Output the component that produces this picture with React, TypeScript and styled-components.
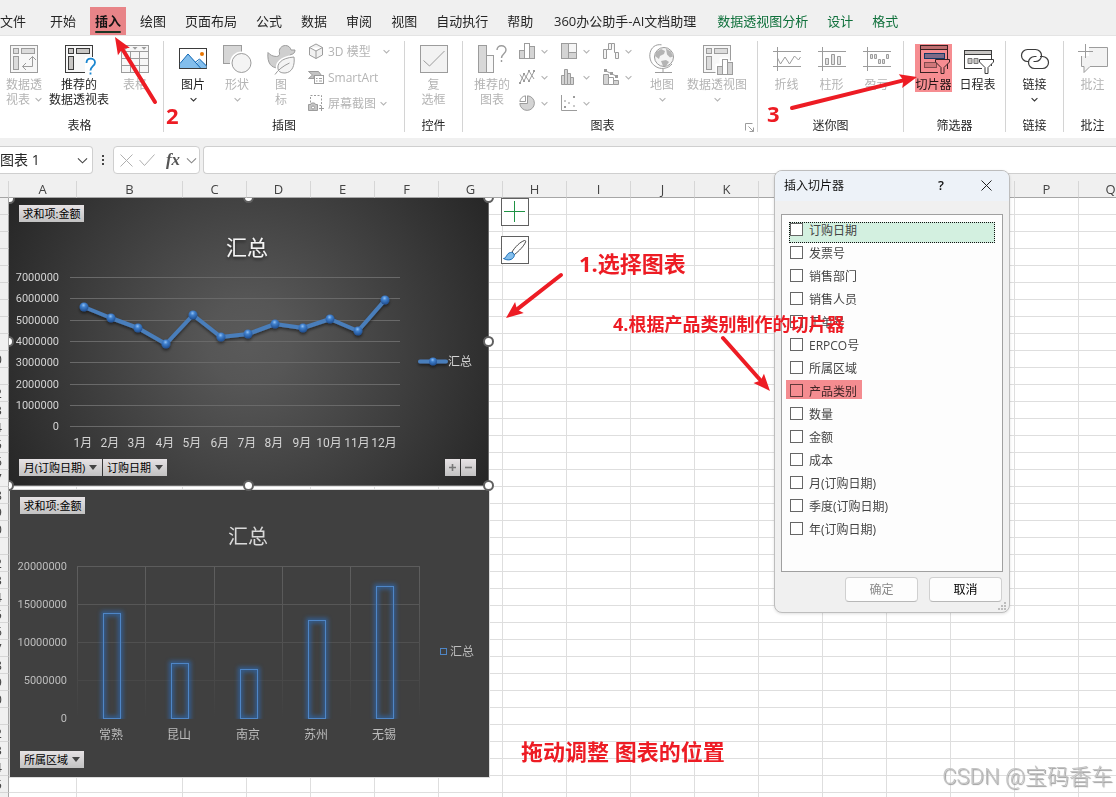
import React from "react";
import styled, { createGlobalStyle } from "styled-components";

const RED = "#ed1c24";
const MARK = "#f68d91";
const GREY = "#9c9c9c";
const DARK = "#3b3b3b";
const LINE = "#dedede";
const UI_FONT = '"Open Sans", "Noto Sans CJK SC", sans-serif';

const GlobalStyle = createGlobalStyle`
  * { box-sizing: border-box; }
  body { margin: 0; background: #fff; font-family: ${UI_FONT}; color: #262626; }
  button, input { font: inherit; color: inherit; }
  button { border: 0; padding: 0; background: none; }
`;

const App = styled.main`
  position: relative;
  height: 100vh;
  overflow: hidden;
  display: flex;
  flex-direction: column;
`;

/* ---------- menu tabs ---------- */

const TabBar = styled.nav`
  flex: none;
  display: flex;
  gap: 9px;
  height: 36px;
  padding-top: 7px;
  background: #f0f0f0;
  border-bottom: 1px solid #e4e4e4;
  overflow: hidden;
`;

const Tab = styled.button<{ $active?: boolean; $context?: boolean; $file?: boolean; $min?: number }>`
  position: relative;
  flex: none;
  height: 29px;
  min-width: ${(p) => p.$min ?? 36}px;
  padding: 0 5px 2px;
  margin: ${(p) => (p.$file ? "0 5px 0 -5px" : "0")};
  font-size: 13px;
  line-height: 26px;
  white-space: nowrap;
  font-weight: ${(p) => (p.$active ? 700 : 400)};
  color: ${(p) => (p.$context ? "#0f703b" : p.$active ? "#141414" : "#262626")};
  background: ${(p) => (p.$active ? "#e88488" : "none")};
  &::after {
    content: "";
    display: ${(p) => (p.$active ? "block" : "none")};
    position: absolute;
    left: 5px;
    right: 5px;
    bottom: 3px;
    height: 2px;
    border-radius: 1px;
    background: #1d3524;
  }
`;

/* ---------- ribbon ---------- */

const Ribbon = styled.section`
  flex: none;
  display: flex;
  height: 102px;
  padding: 2px 0 6px;
  background: #fff;
  overflow: hidden;
`;

const Group = styled.div<{ $width: number; $padRight?: number }>`
  position: relative;
  flex: none;
  display: flex;
  flex-direction: column;
  justify-content: space-between;
  width: ${(p) => p.$width}px;
  padding-right: ${(p) => p.$padRight ?? 1}px;
  &::after {
    content: "";
    position: absolute;
    right: 0;
    top: 3px;
    bottom: 0;
    width: 1px;
    background: #d4d4d4;
  }
`;

const GroupBody = styled.div<{ $start?: number; $center?: boolean; $gap?: number }>`
  display: flex;
  align-items: flex-start;
  gap: ${(p) => p.$gap ?? 0}px;
  padding-left: ${(p) => p.$start ?? 0}px;
  justify-content: ${(p) => (p.$center ? "center" : "flex-start")};
`;

const GroupName = styled.div`
  text-align: center;
  font-size: 12px;
  line-height: 13px;
`;

const LargeButton = styled.button<{ $width: number; $off?: boolean; $marked?: boolean }>`
  position: relative;
  flex: none;
  display: flex;
  flex-direction: column;
  align-items: center;
  width: ${(p) => p.$width}px;
  margin-top: 6px;
  font-size: 12px;
  line-height: 15px;
  white-space: nowrap;
  color: ${(p) => (p.$off ? "#b4b4b4" : "#262626")};
  svg.icon { display: block; margin-bottom: 1px; overflow: visible; }
  &::after {
    content: "";
    display: ${(p) => (p.$marked ? "block" : "none")};
    position: absolute;
    inset: 0;
    background: ${MARK};
    mix-blend-mode: multiply;
  }
`;

const LabelLine = styled.span`
  display: flex;
  align-items: center;
  justify-content: center;
  gap: 5px;
  height: 15px;
`;

const SmallColumn = styled.div`
  display: flex;
  flex-direction: column;
  padding-left: 5px;
`;

const SmallButton = styled.button<{ $gap?: number }>`
  display: flex;
  align-items: center;
  gap: 4px;
  height: 26px;
  font-size: 12px;
  line-height: 15px;
  color: #b4b4b4;
  svg.chev { margin-left: ${(p) => p.$gap ?? 4}px; }
`;

const ChartGrid = styled.div`
  display: grid;
  grid-template-columns: repeat(3, 42px);
  grid-auto-rows: 26px;
  padding-left: 2px;
`;

const ChartButton = styled.button`
  display: flex;
  align-items: center;
  gap: 6px;
`;

const Launcher = styled.button`
  position: absolute;
  right: 3px;
  bottom: -1px;
  line-height: 0;
`;

/* ---------- formula bar ---------- */

const FormulaBar = styled.section`
  flex: none;
  display: flex;
  align-items: center;
  height: 43px;
  padding: 8px 0 7px;
  background: #f0f0f0;
`;

const NameBox = styled.div`
  display: flex;
  align-items: center;
  width: 93px;
  height: 28px;
  padding-right: 4px;
  background: #fff;
  border: 1px solid #cfcfcf;
  border-left: 0;
  border-radius: 0 4px 4px 0;
  input {
    flex: 1;
    min-width: 0;
    padding: 0;
    border: 0;
    background: none;
    font-size: 14px;
    line-height: 20px;
  }
`;

const Dots = styled.div`
  display: flex;
  flex-direction: column;
  align-items: center;
  gap: 2px;
  width: 20px;
  i { width: 2px; height: 2px; background: #444; }
`;

const FxBox = styled.div`
  display: flex;
  align-items: center;
  justify-content: space-between;
  width: 87px;
  height: 28px;
  padding: 0 2px 0 6px;
  margin-right: 3px;
  background: #fff;
  border: 1px solid #cfcfcf;
  border-radius: 4px;
  button { line-height: 0; }
`;

const FxButton = styled.button`
  && {
    margin-left: 5px;
    font-family: "Liberation Serif", serif;
    font-style: italic;
    font-weight: 700;
    font-size: 17px;
    line-height: 20px;
    color: #555;
  }
`;

const FormulaInput = styled.input`
  flex: 1;
  min-width: 0;
  height: 28px;
  padding: 0 8px;
  font-size: 14px;
  background: #fff;
  border: 1px solid #cfcfcf;
  border-right: 0;
  border-radius: 4px 0 0 4px;
`;

/* ---------- sheet ---------- */

const Sheet = styled.section`
  position: relative;
  flex: 1;
  min-height: 0;
  overflow: hidden;
`;

const Grid = styled.table`
  table-layout: fixed;
  width: 1500px;
  margin-left: -19px;
  border-spacing: 0;
  th, td { padding: 0; height: 17px; line-height: 16px; overflow: hidden; }
  th { font-size: 13px; font-weight: 400; color: #444; background: #f0f0f0; text-align: center; }
  thead th { border-bottom: 1px solid #a6a6a6; border-right: 1px solid #d6d6d6; }
  tbody th { border-right: 1px solid #a6a6a6; border-bottom: 1px solid #d6d6d6; }
  td { border-right: 1px solid ${LINE}; border-bottom: 1px solid ${LINE}; }
`;

const Canvas = styled.div`
  position: absolute;
  left: 9px;
  top: 17px;
  right: 0;
  bottom: 0;
  overflow: hidden;
`;

const ChartFrame = styled.figure<{ $x: number; $y: number; $dark?: boolean }>`
  position: absolute;
  left: ${(p) => p.$x}px;
  top: ${(p) => p.$y}px;
  width: ${(p) => (p.$dark ? 479 : 480)}px;
  height: ${(p) => (p.$dark ? 287 : 288)}px;
  margin: 0;
  background: ${(p) => (p.$dark ? "#404040" : "radial-gradient(circle at 50% 50%, #5a5a5a 0, #565656 15%, #262626 100%)")};
  box-shadow: ${(p) => (p.$dark ? "0 0 0 1px #dcdcdc" : "inset -1px -1px 0 #6a6a6a")};
  > svg { display: block; }
`;

const FieldButton = styled.button<{ $x: number; $y: number; $w: number }>`
  position: absolute;
  left: ${(p) => p.$x}px;
  top: ${(p) => p.$y}px;
  width: ${(p) => p.$w}px;
  height: 17px;
  display: flex;
  align-items: center;
  justify-content: center;
  gap: 4px;
  font-size: 11px;
  line-height: 17px;
  white-space: nowrap;
  color: #000;
  background: linear-gradient(#e6e2e4, #c2c2c2);
`;

const Handle = styled.i<{ $x: number; $y: number }>`
  position: absolute;
  left: ${(p) => p.$x - 5}px;
  top: ${(p) => p.$y - 5}px;
  width: 11px;
  height: 11px;
  border-radius: 50%;
  background: #fff;
  border: 2px solid #606060;
`;

const SideTool = styled.button<{ $y: number }>`
  position: absolute;
  left: 492px;
  top: ${(p) => p.$y}px;
  width: 28px;
  height: 28px;
  background: #fff;
  border: 1px solid #606060;
  line-height: 0;
`;

/* ---------- dialog ---------- */

const Dialog = styled.section`
  position: absolute;
  left: 774px;
  top: 170px;
  width: 236px;
  background: #f0f0f0;
  border: 1px solid #bdbdbd;
  border-radius: 8px;
  overflow: hidden;
  box-shadow: 0 1px 3px rgba(0, 0, 0, 0.12);
`;

const DialogTitle = styled.header`
  display: flex;
  align-items: center;
  height: 30px;
  padding: 0 15px 2px 9px;
  background: #edf2f8;
  font-size: 12px;
  color: #111;
  h2 { flex: 1; margin: 0; font-size: 12px; font-weight: 400; line-height: 15px; }
  button { width: 16px; line-height: 0; }
`;

const HelpButton = styled.button`
  && { margin-right: 29px; font-size: 13px; font-weight: 600; line-height: 15px; }
`;

const FieldList = styled.div`
  height: 358px;
  margin: 13px 6px 0;
  padding: 7px;
  background: #fdfdfd;
  border: 1px solid #a0a0a0;
`;

const FieldRow = styled.label<{ $focus?: boolean; $marked?: boolean }>`
  position: relative;
  display: flex;
  align-items: flex-start;
  gap: 6px;
  height: 21px;
  margin-bottom: 2px;
  border: 1px dotted ${(p) => (p.$focus ? "#111" : "transparent")};
  background: ${(p) => (p.$focus ? "#d3f0e0" : "none")};
  font-size: 12px;
  line-height: 16px;
  color: #444;
  input {
    appearance: none;
    flex: none;
    width: 13px;
    height: 13px;
    margin: 0;
    background: #fff;
    border: 1px solid #666;
  }
  &::after {
    content: "";
    display: ${(p) => (p.$marked ? "block" : "none")};
    position: absolute;
    left: -4px;
    top: -4px;
    width: 76px;
    height: 19px;
    background: ${MARK};
    mix-blend-mode: multiply;
  }
`;

const DialogFooter = styled.footer`
  position: relative;
  display: flex;
  justify-content: flex-end;
  gap: 11px;
  padding: 5px 7px 10px;
`;

const DialogButton = styled.button`
  width: 73px;
  height: 25px;
  font-size: 12px;
  line-height: 15px;
  color: #000;
  background: #fdfdfd;
  border: 1px solid #d0d0d0;
  border-bottom-color: #b8b8b8;
  border-radius: 4px;
  &:disabled { color: #8a8a8a; }
`;

const Grip = styled.svg`
  position: absolute;
  right: 2px;
  bottom: 1px;
`;

/* ---------- annotations ---------- */

const Notes = styled.div`
  position: absolute;
  inset: 0;
  pointer-events: none;
  > svg { position: absolute; left: 0; top: 0; }
`;

const Note = styled.span<{ $x: number; $y: number; $size: number }>`
  position: absolute;
  left: ${(p) => p.$x}px;
  top: ${(p) => p.$y}px;
  font-size: ${(p) => p.$size}px;
  line-height: 24px;
  font-weight: 700;
  white-space: nowrap;
  color: ${RED};
`;

const Watermark = styled.span`
  position: absolute;
  right: 3px;
  bottom: 7px;
  font-family: Roboto, "Noto Sans CJK SC", sans-serif;
  font-size: 22px;
  font-weight: 300;
  line-height: 26px;
  white-space: nowrap;
  color: #c4c4c4;
  text-shadow: 1px 1px 1px #9a9a9a;
`;

/* ---------- icons ---------- */

const Chevron = ({ color = "#b4b4b4", size = 7 }: { color?: string; size?: number }) => (
  <svg className="chev" width={size} height={size} viewBox="0 0 7 7" fill="none" stroke={color} strokeWidth={size > 7 ? 0.7 : 1.1}>
    <path d="M.6 2.2 3.5 5 6.4 2.2" />
  </svg>
);

type IconProps = { children: React.ReactNode; size?: number; stroke?: string; fill?: string };
const Icon = ({ children, size = 32, stroke = GREY, fill = "none" }: IconProps) => (
  <svg className="icon" width={size} height={size} viewBox={`0 0 ${size} ${size}`} fill={fill} stroke={stroke}>
    {children}
  </svg>
);

const PivotFrame = ({ shade }: { shade: string }) => (
  <>
    <rect x="2.5" y="1.5" width="27" height="27" fill="#f7f7f7" />
    <g fill={shade}>
      <rect x="5.5" y="4.5" width="5" height="5" />
      <rect x="13.5" y="4.5" width="13" height="5" />
      <rect x="5.5" y="12.5" width="5" height="13" />
    </g>
  </>
);

const PivotIcon = () => (
  <Icon>
    <PivotFrame shade="#dcdcdc" />
    <path d="M14.5 22.5h10v-10M18 19l-3.5 3.5L18 26M21 16l3.5-3.5L28 16" />
  </Icon>
);

const SuggestPivotIcon = () => (
  <Icon stroke={DARK}>
    <PivotFrame shade="#c8c6c4" />
    <path d="M22 13h10v18H22z" fill="#fff" stroke="none" />
    <path d="M23.5 19c0-6 8.5-5.5 8.5-.5 0 3.500-4.500 4-4.500 8M27.500 28.500v2" stroke="#1a86d0" strokeWidth="1.800" />
  </Icon>
);

const TableIcon = () => (
  <Icon>
    <rect x="2.500" y="1.500" width="27" height="27" fill="#f7f7f7" />
    <path d="M2.500 7.500h27M2.500 14.500h27M2.500 21.500h27M11.500 7.500v21M20.500 7.500v21" />
    <path d="M4 3h5L6.500 5.800zM13.500 3h5L16 5.800zM22.500 3h5L25 5.800z" fill={GREY} stroke="none" />
  </Icon>
);

const PictureIcon = () => (
  <Icon stroke={DARK}>
    <rect x="2.500" y="4.500" width="27" height="20" fill="#fff" />
    <path d="M3 19.500 11 10l8.500 9L23 15.500l6.500 6v3H3z" fill="#83beec" stroke="none" />
    <path d="M3 19.500 11 10l12.500 14M18 18.500l4.500-3.500 7 7" stroke="#1369b5" />
    <path d="M2.500 24.500h27" />
    <circle cx="25" cy="10" r="2" fill="#e97500" stroke="none" />
  </Icon>
);

const ShapesIcon = () => (
  <Icon>
    <rect x="2.500" y="1.500" width="18" height="18" fill="#d6d6d6" />
    <circle cx="20.500" cy="19" r="11.500" fill="#fff" stroke="none" />
    <circle cx="20.500" cy="19" r="9.500" fill="#f4f4f4" />
  </Icon>
);

const DuckIcon = () => (
  <Icon>
    <path
      d="M14.500 9c-1-4 2-7.500 6-7.500 3 0 5 2 5.500 4.500h4c0 3-2 4.500-4.500 4.500-.500 2-2 4-3 5.500-2 4.500-5 8-9 8C6 24 2 19 3 8.500c2 2.500 5 4 8.500 4 2 0 3.500-1.500 3-3.500z"
      fill="#cfcfcf"
    />
    <path d="M29 13c1 8-1.500 15.500-9 16-3 0-5-.500-6.500-2.500C11 20 16 14 29 13z" fill="#fff" stroke="#fff" strokeWidth="4" />
    <path d="M29 13c1 8-1.500 15.500-9 16-3 0-5-.500-6.500-2.500C11 20 16 14 29 13z" fill="#f4f4f4" />
    <path d="M10 30.500C13 26 18 22 24.500 19" />
  </Icon>
);

const CubeIcon = () => (
  <Icon size={16}>
    <path d="M8 1l6.500 3.500v7.500L8 15.500 1.500 12V4.500zM1.500 4.500 8 8l6.500-3.500M8 8v7.500" fill="#f1f1f1" />
  </Icon>
);

const SmartArtIcon = () => (
  <Icon size={16}>
    <path d="M.5 2.500h10l3 4H6v3H.5l4-3.500z" fill="#c4c4c4" />
    <rect x="6.500" y="6.500" width="9" height="8" fill="#fff" />
    <path d="M8 9.500h1.500M11 9.500h3M8 12h1.500M11 12h3" />
  </Icon>
);

const ScreenshotIcon = () => (
  <Icon size={16}>
    <rect x="2.500" y=".5" width="11" height="10" strokeDasharray="2 1.500" />
    <path d="M.5 9.500h2l1-1.500h3l1 1.500h2v6h-9z" fill="#c4c4c4" />
    <circle cx="5" cy="12.500" r="1.500" fill="#fff" />
    <path d="M11 13.500h5M13.500 11v5" />
  </Icon>
);

const CheckboxIcon = () => (
  <Icon>
    <rect x="2.500" y="1.500" width="27" height="27" fill="#f2f2f2" />
    <path d="M5.500 16.500l6 5.500L26.500 7" />
  </Icon>
);

const SuggestChartIcon = () => (
  <Icon>
    <rect x="2.500" y="1.500" width="8" height="27" fill="#d8d8d8" />
    <rect x="10.500" y="11.500" width="7" height="17" fill="#f8f8f8" />
    <path d="M21 6c0-6 9-5.500 9 0 0 3.500-4.500 4-4.500 8M25.500 16v2" strokeWidth="1.400" />
  </Icon>
);

const chartIcons: { name: string; art: React.ReactNode }[] = [
  {
    name: "柱形图",
    art: (
      <>
        <rect x=".5" y="7.500" width="5" height="8" fill="#d4d4d4" />
        <rect x="5.500" y=".5" width="5" height="15" fill="#fff" />
        <rect x="10.500" y="3.500" width="5" height="12" fill="#d4d4d4" />
      </>
    ),
  },
  {
    name: "层次结构图",
    art: (
      <>
        <rect x=".5" y=".5" width="15" height="15" fill="#d4d4d4" />
        <path d="M7.500.5h8v9h-8z" fill="#f6f6f6" />
        <path d="M7.500 9v6.500" />
      </>
    ),
  },
  {
    name: "瀑布图",
    art: <path d="M.5 15.500v-9h3v9zM5.500 6.500v-6h3v6zM8.500.5h3v9M12.500 9.500h3v6h-3zM3.500 6.500h2M11.500 9.500h1" fill="#f4f4f4" />,
  },
  {
    name: "折线图",
    art: (
      <>
        <path d="M1 14l4-9 5 7 5-9.500" />
        <path d="M1 5.500 5 12l5-10 5 8" />
        <path d="M0 13h2v2H0zM4 4h2v2H4zM9 11h2v2H9zM14 1h2v2h-2zM4 11h2v2H4zM9 1h2v2H9z" fill={GREY} stroke="none" />
      </>
    ),
  },
  {
    name: "统计图",
    art: <path d="M.5 15.500v-9h3v9zM3.500 15.500V.5h3v15zM6.500 15.500v-11h3v11zM9.500 15.500v-7h3v7z" fill="#d4d4d4" />,
  },
  {
    name: "组合图",
    art: (
      <>
        <path d="M.5 15.500v-10h5v10z" fill="#d4d4d4" />
        <path d="M5.500 15.500v-7h5v7z" fill="#fff" />
        <path d="M10.500 15.500v-4h5v4z" fill="#d4d4d4" />
        <path d="M2 1.500l6 3 6 3" />
        <path d="M1 0h3v3H1zM7 3h3v3H7zM12 6h3v3h-3z" fill={GREY} stroke="none" />
      </>
    ),
  },
  {
    name: "饼图",
    art: (
      <>
        <path d="M8.500.8A7.300 7.300 0 1 1 .8 8.500h7.700z" fill="#d4d4d4" />
        <path d="M6.500.8v5.700H.8A7 7 0 0 1 6.500.8z" fill="#fff" />
      </>
    ),
  },
  {
    name: "散点图",
    art: (
      <>
        <path d="M.5 0v15.500H16" />
        <path d="M3 5h2v2H3zM7 7h2v2H7zM12 10h2v2h-2z" fill="#c9c9c9" stroke="none" />
        <path d="M12 1h2v2h-2zM3 11h2v2H3z" fill={GREY} stroke="none" />
      </>
    ),
  },
];

const GlobeIcon = () => (
  <Icon>
    <circle cx="18" cy="13" r="9.500" fill="#f4f4f4" />
    <path d="M10 8l5-3 4 2-1 3-4 2-1 3-4-3zM20 4.500l5 3 2 5-3 1-3-3zM15 17l5-1 3 2-3 4h-3z" fill="#b4b4b4" stroke="none" />
    <path d="M15.500.8C3-1 0 16 9 22c5 4 13 3 17-2M17 25v3M9 28.500h17" />
  </Icon>
);

const PivotChartIcon = () => (
  <Icon>
    <PivotFrame shade="#dcdcdc" />
    <path d="M15 20h4v-6h8v3h4v14H15z" fill="#fff" stroke="#fff" />
    <rect x="16.500" y="22.500" width="5" height="8" fill="#d4d4d4" />
    <rect x="21.500" y="15.500" width="5" height="15" fill="#fff" />
    <rect x="26.500" y="18.500" width="5" height="12" fill="#d4d4d4" />
  </Icon>
);

const SparkFrame = ({ children }: { children: React.ReactNode }) => (
  <Icon>
    <path d="M2 7.500h28M2 22.500h28M6.500 3v24" />
    {children}
  </Icon>
);

const Funnel = () => (
  <path d="M17.500 15.500h14v2.500l-5.500 5.500v6h-3v-6L17.500 18z" fill="#fff" stroke={DARK} />
);

const SlicerIcon = () => (
  <Icon stroke={DARK}>
    <rect x="2.500" y="1.500" width="27" height="27" fill="#fff" />
    <rect x="2.500" y="1.500" width="27" height="4" fill="#c8c6c4" />
    <rect x="6.500" y="9.500" width="20" height="5" fill="#83beec" stroke="#1369b5" />
    <rect x="6.500" y="18.500" width="12" height="5" fill="#d8d6d4" stroke="#888" />
    <path d="M20 25h11v5H20z" fill="#fff" stroke="none" />
    <Funnel />
  </Icon>
);

const TimelineIcon = () => (
  <Icon stroke={DARK}>
    <rect x="2.500" y="6.500" width="27" height="18" fill="#fff" />
    <rect x="2.500" y="6.500" width="27" height="4" fill="#c8c6c4" />
    <path d="M6 14.500h4v5H6zM12 14.500h4v5h-4z" fill="#c8c6c4" stroke="#777" />
    <path d="M20 22h12v6H20z" fill="#fff" stroke="none" />
    <Funnel />
  </Icon>
);

const LinkIcon = () => (
  <Icon stroke={DARK}>
    <path d="M9.500 17.500H8.500a6 6 0 0 1 0-12h8a6 6 0 0 1 0 12h-2" strokeWidth="1.200" />
    <path d="M21 12.500h2.500a6 6 0 0 1 0 12h-8a6 6 0 0 1 0-12h2" strokeWidth="1.200" />
  </Icon>
);

const CommentIcon = () => (
  <Icon>
    <path d="M4.500 3.500h26v19H13l-6 6v-6H4.500z" fill="#f2f2f2" />
    <path d="M0 0h12v12H0z" fill="#fff" stroke="none" />
    <path d="M1 7.500h15M8.500 0v14" />
  </Icon>
);

const Arrow = ({ from, to }: { from: [number, number]; to: [number, number] }) => {
  const dx = to[0] - from[0];
  const dy = to[1] - from[1];
  const length = Math.hypot(dx, dy);
  const angle = (Math.atan2(dy, dx) * 180) / Math.PI;
  return (
    <g transform={`translate(${from[0]} ${from[1]}) rotate(${angle})`}>
      <path d={`M0 0H${length - 12}`} stroke={RED} strokeWidth="4" strokeLinecap="round" />
      <path d={`M${length} 0l-17-7 3 7-3 7z`} fill={RED} />
    </g>
  );
};

/* ---------- data ---------- */

const tabs: { text: string; active?: boolean; context?: boolean; file?: boolean; min?: number }[] = [
  { text: "文件", file: true },
  { text: "开始" },
  { text: "插入", active: true },
  { text: "绘图" },
  { text: "页面布局" },
  { text: "公式" },
  { text: "数据" },
  { text: "审阅" },
  { text: "视图" },
  { text: "自动执行" },
  { text: "帮助" },
  { text: "360办公助手-AI文档助理", min: 156 },
  { text: "数据透视图分析", context: true },
  { text: "设计", context: true },
  { text: "格式", context: true },
];

const columns = "ABCDEFGHIJKLMNOPQ".split("");
const rows = Array.from({ length: 36 }, (_, i) => i + 1);
const columnWidth = (name: string) => (name === "A" ? 68 : name === "B" ? 106 : 64);

const monthly: [number, number][] = [
  [75, 109], [102, 120], [129, 130], [157, 146], [184, 117], [212, 139],
  [239, 136], [266, 126], [294, 130], [321, 121], [349, 133], [376, 102],
];

const cities = [
  { name: "常熟", x: 93, top: 123 },
  { name: "昆山", x: 161, top: 173 },
  { name: "南京", x: 230, top: 179 },
  { name: "苏州", x: 298, top: 130 },
  { name: "无锡", x: 366, top: 96 },
];

const fields = [
  "订购日期", "发票号", "销售部门", "销售人员", "工单号", "ERPCO号", "所属区域",
  "产品类别", "数量", "金额", "成本", "月(订购日期)", "季度(订购日期)", "年(订购日期)",
];

const ChartText = styled.text<{ $size?: number }>`
  font-family: Roboto, "Noto Sans CJK SC", sans-serif;
  font-size: ${(p) => p.$size ?? 11}px;
`;

const Triangle = () => (
  <svg width="8" height="5" viewBox="0 0 8 5">
    <path d="M0 0h8L4 5z" fill="#444" />
  </svg>
);

/* ---------- charts ---------- */

const LineChart = () => (
  <ChartFrame $x={0} $y={0}>
    <svg width="480" height="288" viewBox="0 0 480 288">
      <defs>
        <radialGradient id="ball" cx=".45" cy=".3" r=".7">
          <stop offset="0" stopColor="#8fc0f5" />
          <stop offset=".35" stopColor="#3f7fcc" />
          <stop offset="1" stopColor="#1f4c8c" />
        </radialGradient>
        <filter id="drop" x="-10%" y="-30%" width="120%" height="170%">
          <feDropShadow dx="0" dy="2" stdDeviation="1.500" floodColor="#000" floodOpacity=".5" />
        </filter>
      </defs>
      <g filter="url(#drop)">
        <ChartText $size={21} x="238" y="57" textAnchor="middle" fill="#f5f5f5">汇总</ChartText>
      </g>
      {[7, 6, 5, 4, 3, 2, 1, 0].map((n, i) => {
        const y = Math.round(79 + i * 21.3);
        return (
          <g key={n}>
            <path d={`M61 ${y + 0.5}H391`} stroke="#696969" />
            <ChartText x="50" y={y + 4} textAnchor="end" fill="#d4d4d4">{n * 1000000}</ChartText>
          </g>
        );
      })}
      <g filter="url(#drop)">
        <polyline points={monthly.map((p) => p.join(",")).join(" ")} fill="none" stroke="#4a7ebb" strokeWidth="4" strokeLinejoin="round" />
        {monthly.map(([x, y]) => (
          <circle key={x} cx={x} cy={y} r="4.500" fill="url(#ball)" />
        ))}
        <path d="M411 163.500h26" stroke="#4a7ebb" strokeWidth="4" strokeLinecap="round" />
        <circle cx="424" cy="163.500" r="4" fill="url(#ball)" />
      </g>
      {monthly.map(([x], i) => (
        <ChartText key={x} $size={12} x={x - 1} y="249" textAnchor="middle" fill="#d4d4d4">{i + 1}月</ChartText>
      ))}
      <ChartText $size={12} x="439" y="168" fill="#d4d4d4">汇总</ChartText>
    </svg>
    <FieldButton $x={10} $y={7} $w={65}>求和项:金额</FieldButton>
    <FieldButton $x={10} $y={261} $w={83}>月(订购日期)<Triangle /></FieldButton>
    <FieldButton $x={94} $y={261} $w={64}>订购日期<Triangle /></FieldButton>
    <FieldButton $x={436} $y={261} $w={15} aria-label="展开">
      <svg width="7" height="7" viewBox="0 0 7 7"><path d="M0 3.500h7M3.500 0v7" stroke="#777" strokeWidth="1.600" /></svg>
    </FieldButton>
    <FieldButton $x={452} $y={261} $w={15} aria-label="折叠">
      <svg width="7" height="7" viewBox="0 0 7 7"><path d="M0 3.500h7" stroke="#777" strokeWidth="1.600" /></svg>
    </FieldButton>
  </ChartFrame>
);

const BarChart = () => (
  <ChartFrame $x={1} $y={292} $dark>
    <svg width="479" height="287" viewBox="0 0 479 287">
      <defs>
        <linearGradient id="fade" gradientUnits="userSpaceOnUse" x1="0" y1="76" x2="0" y2="228">
          <stop offset="0" stopColor="#5f5f5f" />
          <stop offset=".5" stopColor="#525252" />
          <stop offset="1" stopColor="#404040" />
        </linearGradient>
        <filter id="glow" filterUnits="userSpaceOnUse" x="60" y="80" width="360" height="149">
          <feGaussianBlur stdDeviation="2" />
        </filter>
      </defs>
      <ChartText $size={20} x="238" y="54" textAnchor="middle" fill="#d9d9d9">汇总</ChartText>
      {[67, 135, 204, 272, 340, 409].map((x) => (
        <rect key={x} x={x} y="76" width="1" height="150" fill="url(#fade)" />
      ))}
      {["#5c5c5c", "#575757", "#505050", "#484848"].map((c, i) => (
        <path key={c} d={`M67 ${76.5 + i * 38}H410`} stroke={c} />
      ))}
      {[20, 15, 10, 5, 0].map((n, i) => (
        <ChartText key={n} x="57" y={80 + i * 38} textAnchor="end" fill="#bdbdbd">{n * 1000000}</ChartText>
      ))}
      {cities.map(({ name, x, top }) => (
        <g key={name}>
          <rect x={x + 0.5} y={top + 0.5} width="17" height={228 - top} fill="none" stroke="#2f68ab" strokeWidth="5" filter="url(#glow)" opacity=".75" />
          <rect x={x + 0.5} y={top + 0.5} width="17" height={228 - top} fill="none" stroke="#4f86c6" />
          <ChartText $size={12} x={x + 8} y="249" textAnchor="middle" fill="#bdbdbd">{name}</ChartText>
        </g>
      ))}
      <rect x="430.500" y="158.500" width="6" height="6" fill="none" stroke="#4f86c6" />
      <ChartText $size={12} x="440" y="166" fill="#bdbdbd">汇总</ChartText>
    </svg>
    <FieldButton $x={10} $y={7} $w={65}>求和项:金额</FieldButton>
    <FieldButton $x={10} $y={261} $w={64}>所属区域<Triangle /></FieldButton>
  </ChartFrame>
);

const handles: [number, number][] = [
  [0, 0], [239, -1], [479, -1], [-1, 143], [479, 143], [-1, 287], [239, 287], [479, 287],
];

/* ---------- page ---------- */

export default function ExcelWindow() {
  return (
    <App>
      <GlobalStyle />
      <TabBar>
        {tabs.map((t) => (
          <Tab key={t.text} $active={t.active} $context={t.context} $file={t.file} $min={t.min}>{t.text}</Tab>
        ))}
      </TabBar>

      <Ribbon>
        <Group $width={164} $padRight={5}>
          <GroupBody>
            <LargeButton $width={48} $off>
              <PivotIcon />
              <LabelLine>数据透</LabelLine>
              <LabelLine>视表<Chevron /></LabelLine>
            </LargeButton>
            <LargeButton $width={62}>
              <SuggestPivotIcon />
              <LabelLine>推荐的</LabelLine>
              <LabelLine>数据透视表</LabelLine>
            </LargeButton>
            <LargeButton $width={50} $off>
              <TableIcon />
              <LabelLine>表格</LabelLine>
            </LargeButton>
          </GroupBody>
          <GroupName>表格</GroupName>
        </Group>

        <Group $width={241}>
          <GroupBody $start={7}>
            <LargeButton $width={44}>
              <PictureIcon />
              <LabelLine>图片</LabelLine>
              <LabelLine><Chevron color="#333" /></LabelLine>
            </LargeButton>
            <LargeButton $width={44} $off>
              <ShapesIcon />
              <LabelLine>形状</LabelLine>
              <LabelLine><Chevron /></LabelLine>
            </LargeButton>
            <LargeButton $width={44} $off>
              <DuckIcon />
              <LabelLine>图</LabelLine>
              <LabelLine>标</LabelLine>
            </LargeButton>
            <SmallColumn>
              <SmallButton $gap={8}><CubeIcon />3D 模型<Chevron /></SmallButton>
              <SmallButton><SmartArtIcon />SmartArt</SmallButton>
              <SmallButton $gap={0}><ScreenshotIcon />屏幕截图<Chevron /></SmallButton>
            </SmallColumn>
          </GroupBody>
          <GroupName>插图</GroupName>
        </Group>

        <Group $width={58}>
          <GroupBody $center>
            <LargeButton $width={44} $off>
              <CheckboxIcon />
              <LabelLine>复</LabelLine>
              <LabelLine>选框</LabelLine>
            </LargeButton>
          </GroupBody>
          <GroupName>控件</GroupName>
        </Group>

        <Group $width={295} $padRight={16}>
          <GroupBody $start={4}>
            <LargeButton $width={50} $off>
              <SuggestChartIcon />
              <LabelLine>推荐的</LabelLine>
              <LabelLine>图表</LabelLine>
            </LargeButton>
            <ChartGrid>
              {chartIcons.map(({ name, art }) => (
                <ChartButton key={name} aria-label={name}>
                  <Icon size={16}>{art}</Icon>
                  <Chevron />
                </ChartButton>
              ))}
            </ChartGrid>
            <LargeButton $width={34} $off>
              <GlobeIcon />
              <LabelLine>地图</LabelLine>
              <LabelLine><Chevron /></LabelLine>
            </LargeButton>
            <LargeButton $width={76} $off>
              <PivotChartIcon />
              <LabelLine>数据透视图</LabelLine>
              <LabelLine><Chevron /></LabelLine>
            </LargeButton>
          </GroupBody>
          <GroupName>图表</GroupName>
          <Launcher aria-label="图表选项">
            <svg width="10" height="10" viewBox="0 0 10 10" fill="none" stroke={GREY}>
              <path d="M.5 7.500v-7h7M3.500 3.500l5 5M4.500 8.500h4v-4" />
            </svg>
          </Launcher>
        </Group>

        <Group $width={146}>
          <GroupBody $start={6}>
            <LargeButton $width={45} $off>
              <SparkFrame><path d="M6.500 14l3 6 4.500-7 4.500 7 5-8 4 4 2-3" /></SparkFrame>
              <LabelLine>折线</LabelLine>
            </LargeButton>
            <LargeButton $width={45} $off>
              <SparkFrame><path d="M9.500 14.500h3v6h-3zM15.500 10.500h3v10h-3zM21.500 12.500h3v8h-3z" fill="#e2e2e2" /></SparkFrame>
              <LabelLine>柱形</LabelLine>
            </LargeButton>
            <LargeButton $width={45} $off>
              <SparkFrame><path d="M9.500 10.500h2v4h-2zM13.500 10.500h2v4h-2zM17.500 15.500h2v4h-2zM21.500 15.500h2v4h-2zM25.500 10.500h2v4h-2z" fill="#e2e2e2" /></SparkFrame>
              <LabelLine>盈亏</LabelLine>
            </LargeButton>
          </GroupBody>
          <GroupName>迷你图</GroupName>
        </Group>

        <Group $width={102}>
          <GroupBody $start={11} $gap={7}>
            <LargeButton $width={37} $marked>
              <SlicerIcon />
              <LabelLine>切片器</LabelLine>
            </LargeButton>
            <LargeButton $width={37}>
              <TimelineIcon />
              <LabelLine>日程表</LabelLine>
            </LargeButton>
          </GroupBody>
          <GroupName>筛选器</GroupName>
        </Group>

        <Group $width={58}>
          <GroupBody $center>
            <LargeButton $width={44}>
              <LinkIcon />
              <LabelLine>链接</LabelLine>
              <LabelLine><Chevron color="#333" /></LabelLine>
            </LargeButton>
          </GroupBody>
          <GroupName>链接</GroupName>
        </Group>

        <Group $width={58}>
          <GroupBody $center>
            <LargeButton $width={44} $off>
              <CommentIcon />
              <LabelLine>批注</LabelLine>
            </LargeButton>
          </GroupBody>
          <GroupName>批注</GroupName>
        </Group>
      </Ribbon>

      <FormulaBar>
        <NameBox>
          <input aria-label="名称框" defaultValue="图表 1" />
          <Chevron color="#444" size={11} />
        </NameBox>
        <Dots><i /><i /><i /></Dots>
        <FxBox>
          <button aria-label="取消输入">
            <svg width="13" height="13" viewBox="0 0 13 13" stroke="#b0b0b0"><path d="M.5.5l12 12M12.500.5l-12 12" /></svg>
          </button>
          <button aria-label="确认输入">
            <svg width="16" height="12" viewBox="0 0 16 12" fill="none" stroke="#b0b0b0"><path d="M.5 6l5 5.500L15.500.5" /></svg>
          </button>
          <FxButton>fx</FxButton>
          <Chevron color="#888" size={11} />
        </FxBox>
        <FormulaInput aria-label="编辑栏" />
      </FormulaBar>

      <Sheet>
        <Grid>
          <colgroup>
            <col style={{ width: 28 }} />
            {columns.map((c) => (
              <col key={c} style={{ width: columnWidth(c) }} />
            ))}
            <col />
          </colgroup>
          <thead>
            <tr>
              <th />
              {columns.map((c) => <th key={c} scope="col">{c}</th>)}
              <th />
            </tr>
          </thead>
          <tbody>
            {rows.map((r) => (
              <tr key={r}>
                <th scope="row">{r}</th>
                {columns.map((c) => <td key={c} />)}
                <td />
              </tr>
            ))}
          </tbody>
        </Grid>

        <Canvas>
          <BarChart />
          <LineChart />
          {handles.map(([x, y]) => <Handle key={`${x},${y}`} $x={x} $y={y} />)}
          <SideTool $y={0} aria-label="图表元素">
            <svg width="26" height="26" viewBox="0 0 26 26"><path d="M2 12.500h21M12.500 2v21" stroke="#1f9244" /></svg>
          </SideTool>
          <SideTool $y={38} aria-label="图表样式">
            <svg width="26" height="26" viewBox="0 0 26 26" fill="none">
              <path d="M10 15C13 10 18 5 22.500 3.500c1 0 1.500.5 1 1.500C22 9 17 14 12.500 17.500z" fill="#fff" stroke="#444" />
              <path d="M1.500 21.500c3 0 3-5.500 7-6 3-.5 4.500 2 3.500 4-1.500 3.500-6 4.500-10.500 2z" fill="#83beec" stroke="#1369b5" />
            </svg>
          </SideTool>
        </Canvas>
      </Sheet>

      <Dialog role="dialog" aria-labelledby="slicer-title">
        <DialogTitle>
          <h2 id="slicer-title">插入切片器</h2>
          <HelpButton>?</HelpButton>
          <button aria-label="关闭">
            <svg width="11" height="11" viewBox="0 0 11 11" stroke="#222"><path d="M.5.5l10 10M10.500.5l-10 10" /></svg>
          </button>
        </DialogTitle>
        <FieldList>
          {fields.map((f, i) => (
            <FieldRow key={f} $focus={i === 0} $marked={f === "产品类别"}>
              <input type="checkbox" />
              {f}
            </FieldRow>
          ))}
        </FieldList>
        <DialogFooter>
          <DialogButton disabled>确定</DialogButton>
          <DialogButton>取消</DialogButton>
          <Grip width="9" height="9" viewBox="0 0 9 9">
            <path d="M6 0h2v2H6zM3 3h2v2H3zM6 3h2v2H6zM0 6h2v2H0zM3 6h2v2H3zM6 6h2v2H6z" fill="#bdbdbd" />
          </Grip>
        </DialogFooter>
      </Dialog>

      <Notes>
        <svg width="1116" height="480" viewBox="0 0 1116 480" fill="none">
          <Arrow from={[155, 102]} to={[115, 37]} />
          <Arrow from={[792, 108]} to={[917, 77]} />
          <Arrow from={[561, 275]} to={[506, 318]} />
          <Arrow from={[723, 338]} to={[770, 391]} />
        </svg>
        <Note $x={166} $y={103} $size={22}>2</Note>
        <Note $x={767} $y={101} $size={22}>3</Note>
        <Note $x={579} $y={251} $size={22}>1.选择图表</Note>
        <Note $x={613} $y={312} $size={18}>4.根据产品类别制作的切片器</Note>
        <Note $x={521} $y={739} $size={22}>拖动调整 图表的位置</Note>
        <Watermark>CSDN @宝码香车</Watermark>
      </Notes>
    </App>
  );
}
